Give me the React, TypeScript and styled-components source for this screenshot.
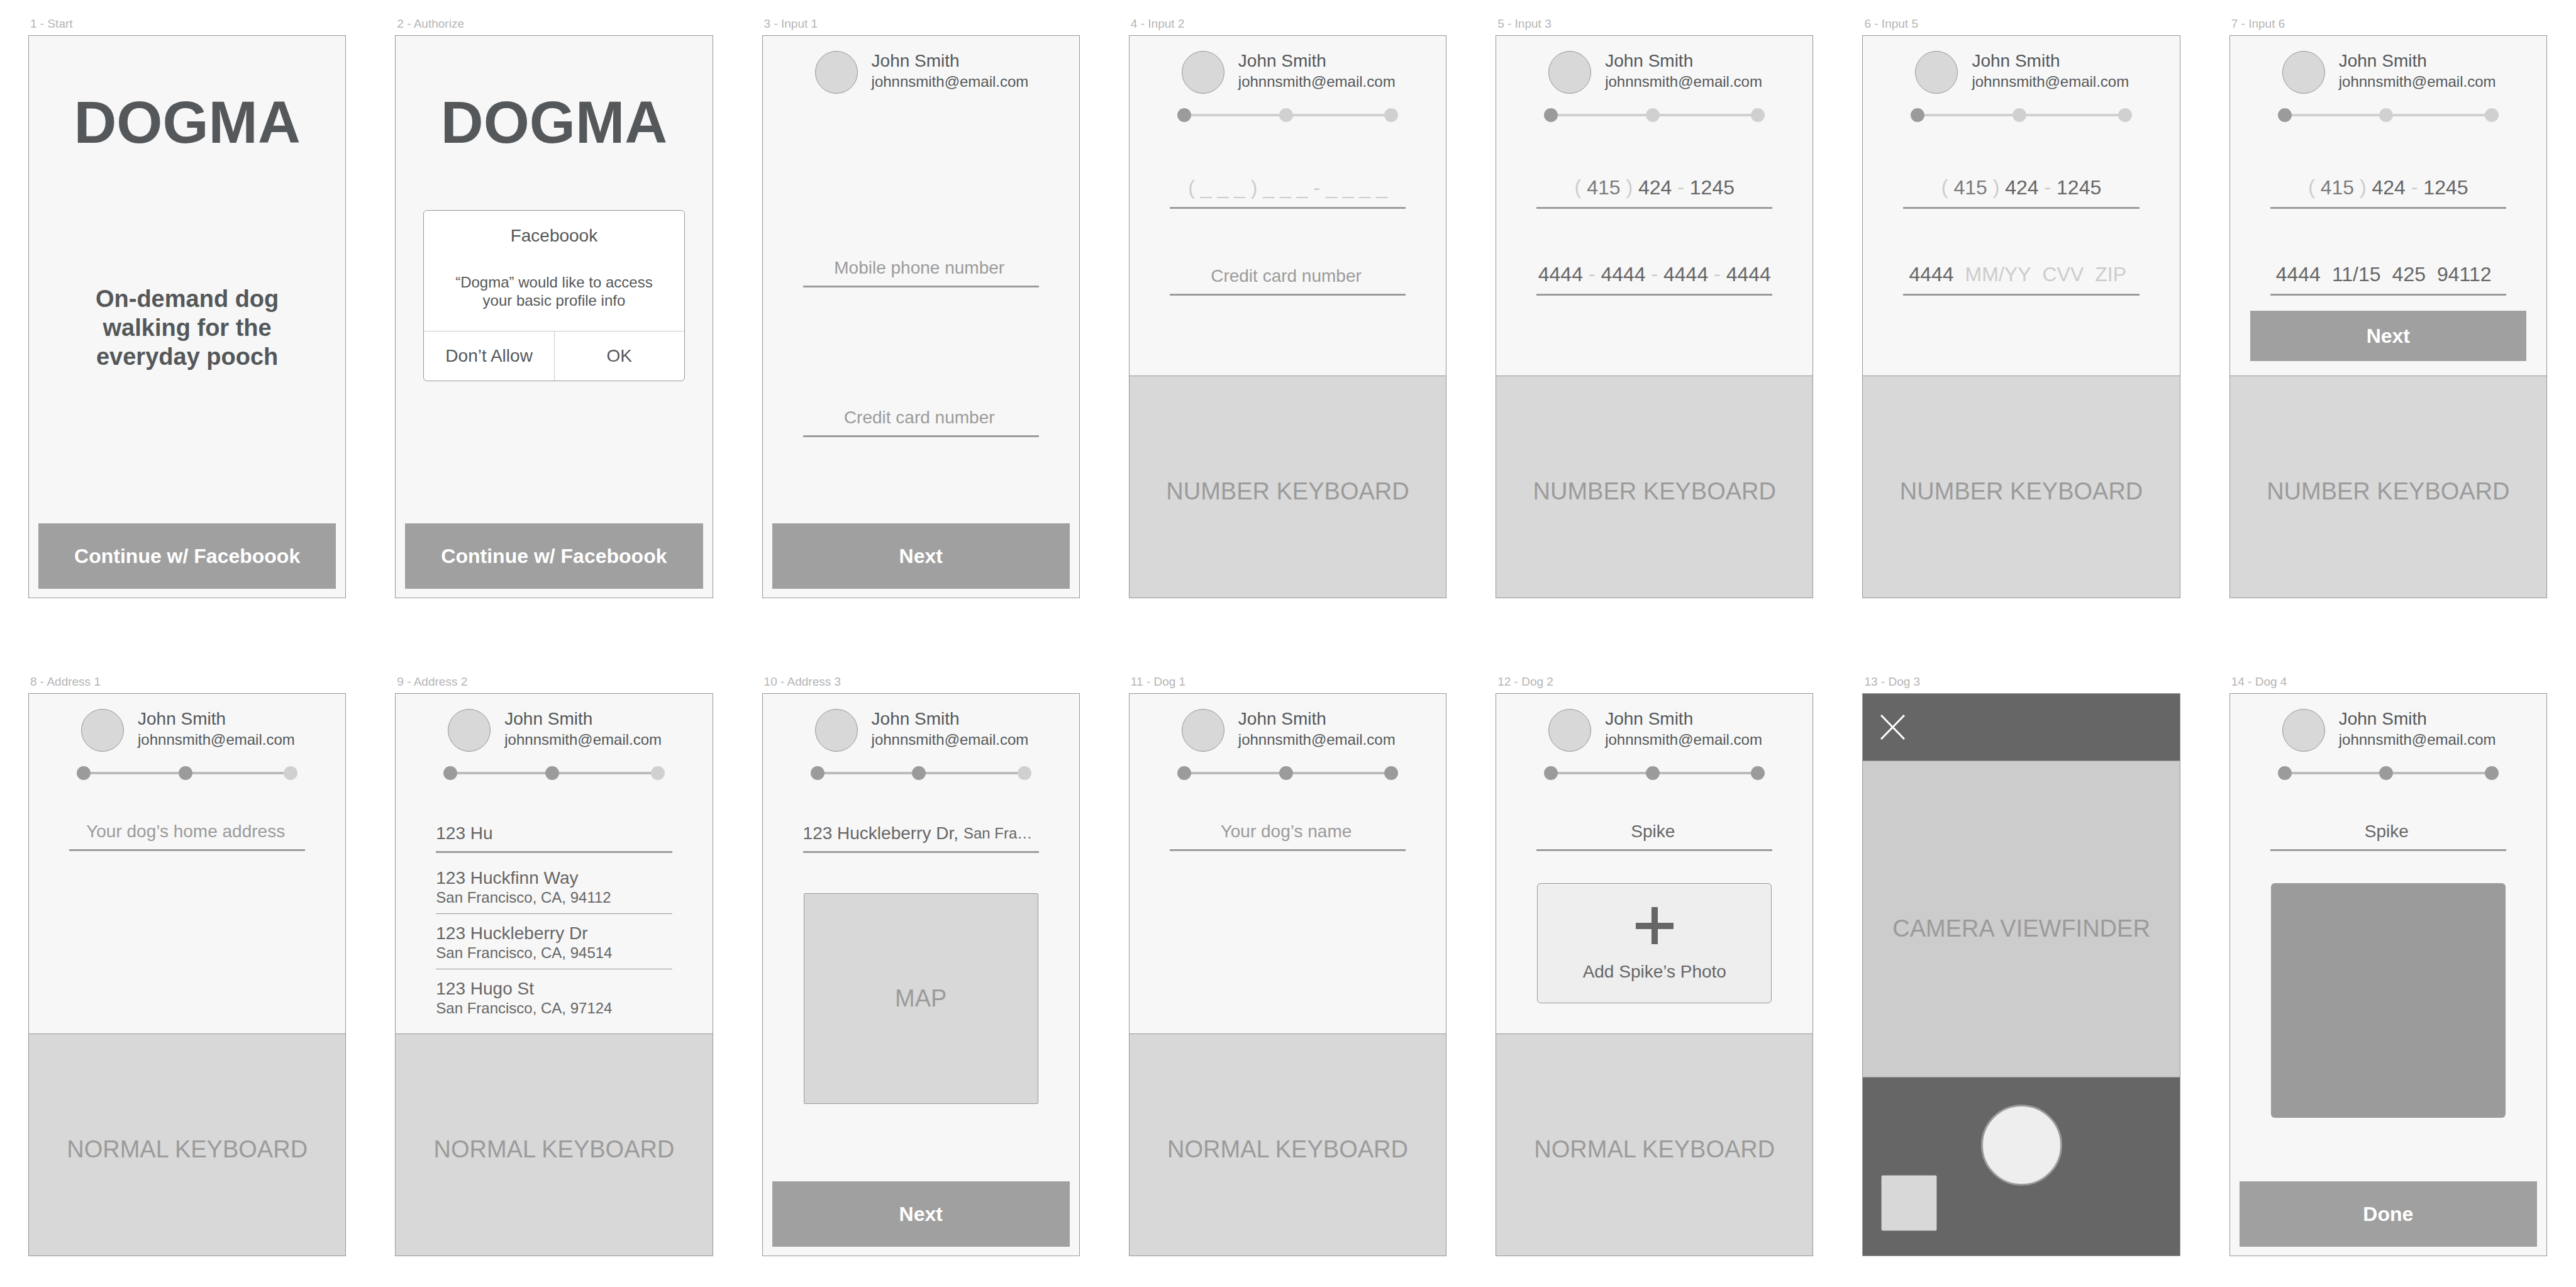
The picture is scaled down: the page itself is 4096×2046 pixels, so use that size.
import React from 'react';
import styled, { createGlobalStyle } from 'styled-components';

const color = {
  ink: '#54585a',
  text: '#666666',
  muted: '#9b9b9b',
  faint: '#cccccc',
  line: '#979797',
  screen: '#f7f7f7',
  block: '#d8d8d8',
  button: '#a0a0a0',
  camera: '#666666',
};

const GlobalStyle = createGlobalStyle`
  *, *::before, *::after { box-sizing: border-box; }
  body { margin: 0; background: #ffffff; }
  body, button, input { font-family: "Liberation Sans", Arial, Helvetica, sans-serif; }
  h1, h2, p, ul, figure { margin: 0; padding: 0; }
  button, input { margin: 0; padding: 0; border: 0; border-radius: 0; background: none; outline: none; }
`;

/* ---------- board ---------- */

const Board = styled.main`
  display: grid;
  grid-template-columns: repeat(7, minmax(0, 1fr));
  column-gap: 78px;
  row-gap: 119px;
  padding: 24px 46px 48px 45px;
`;

const Artboard = styled.section`
  display: flex;
  flex-direction: column;
`;

const ArtboardName = styled.h2`
  padding: 0 3px;
  margin-bottom: 4px;
  font-size: 19px;
  font-weight: 400;
  line-height: 28px;
  color: #b5b5b5;
`;

const Screen = styled.div`
  display: flex;
  flex-direction: column;
  min-height: 895px;
  border: 1px solid ${color.line};
  background: ${color.screen};
`;

const Body = styled.div<{ $top?: number }>`
  flex: 1;
  display: flex;
  flex-direction: column;
  padding: ${(p) => p.$top ?? 0}px 64px 0;
`;

/* ---------- shared parts ---------- */

const Wordmark = styled.h1`
  margin-top: 90px;
  font-size: 94px;
  line-height: 95px;
  font-weight: 700;
  text-align: center;
  color: ${color.ink};
`;

const Tagline = styled.p`
  width: 320px;
  margin: 210px auto auto;
  font-size: 38px;
  line-height: 46px;
  font-weight: 700;
  text-align: center;
  color: ${color.ink};
`;

const PrimaryButton = styled.button<{ $compact?: boolean }>`
  height: ${(p) => (p.$compact ? 80 : 104)}px;
  margin: ${(p) => (p.$compact ? '24px -32px 0' : 'auto 15px 14px')};
  background: ${color.button};
  color: #ffffff;
  font-size: 32px;
  line-height: 40px;
  font-weight: 700;
`;

const ProfileBar = styled.header`
  display: flex;
  align-items: center;
  gap: 22px;
  padding: 24px 0 0 83px;
`;

const Avatar = styled.span`
  width: 68px;
  height: 68px;
  border: 1px solid ${color.line};
  border-radius: 50%;
  background: ${color.block};
`;

const ProfileText = styled.div`
  color: ${color.ink};
`;

const ProfileName = styled.p`
  font-size: 28px;
  line-height: 30px;
`;

const ProfileEmail = styled.p`
  font-size: 24px;
  line-height: 36px;
`;

const Steps = styled.div`
  display: flex;
  align-items: center;
  margin-top: 23px;
  padding: 0 76px;
`;

const Dot = styled.span<{ $on: boolean }>`
  width: 22px;
  height: 22px;
  border-radius: 50%;
  background: ${(p) => (p.$on ? color.muted : '#d0d0d0')};
`;

const Track = styled.span<{ $grow: number; $advanced: boolean }>`
  flex: ${(p) => p.$grow} 1 0;
  height: 4px;
  background: ${(p) => (p.$advanced ? '#bcbcbc' : '#d0d0d0')};
`;

const FieldBox = styled.label<{ $large?: boolean; $gap?: number; $start?: boolean }>`
  display: flex;
  align-items: center;
  justify-content: ${(p) => (p.$start ? 'flex-start' : 'center')};
  gap: ${(p) => (p.$start ? 8 : 0)}px;
  height: 59px;
  margin-top: ${(p) => p.$gap ?? 0}px;
  padding-bottom: ${(p) => (p.$large ? 7 : 0)}px;
  border-bottom: 3px solid ${color.muted};
  font-size: ${(p) => (p.$large ? 32 : 28)}px;
  color: ${color.faint};
  white-space: pre;
`;

const TextInput = styled.input<{ $align?: 'left' | 'center'; $mask?: boolean }>`
  width: 100%;
  padding-right: ${(p) => (p.$align === 'left' || p.$mask ? 0 : 5)}px;
  font-size: inherit;
  line-height: 40px;
  text-align: ${(p) => p.$align ?? 'center'};
  color: ${color.text};
  &::placeholder {
    color: ${(p) => (p.$mask ? color.faint : color.muted)};
    opacity: 1;
  }
`;

const Segment = styled.input<{ $small?: boolean; $soft?: boolean }>`
  field-sizing: content;
  font-size: ${(p) => (p.$small ? '24px' : 'inherit')};
  line-height: 40px;
  color: ${(p) => (p.$soft ? '#7b7b7b' : color.text)};
  &::placeholder {
    color: ${color.faint};
    opacity: 1;
  }
`;

const CardParts = styled.div`
  display: flex;
  flex: 1;
  gap: 18px;
  padding-left: 9px;
`;

const Keyboard = styled.div`
  display: flex;
  align-items: center;
  justify-content: center;
  height: 353px;
  padding-top: 14px;
  border-top: 1px solid ${color.line};
  background: ${color.block};
  font-size: 38px;
  line-height: 46px;
  color: ${color.muted};
`;

/* ---------- permission alert ---------- */

const Alert = styled.div`
  display: flex;
  flex-direction: column;
  margin: 92px 44px 0;
  border: 1px solid ${color.line};
  border-radius: 6px;
  background: #ffffff;
  text-align: center;
  color: ${color.ink};
`;

const AlertTitle = styled.p`
  padding-top: 24px;
  font-size: 28px;
  line-height: 32px;
`;

const AlertMessage = styled.p`
  width: 340px;
  margin: 43px auto 34px;
  font-size: 24px;
  line-height: 29px;
`;

const AlertActions = styled.div`
  display: grid;
  grid-template-columns: 1fr 1fr;
  border-top: 1px solid ${color.faint};
`;

const AlertButton = styled.button`
  height: 78px;
  font-size: 28px;
  color: ${color.ink};
  & + & { border-left: 1px solid ${color.faint}; }
`;

/* ---------- address ---------- */

const Suggestions = styled.ul`
  margin-top: 9px;
  list-style: none;
  color: ${color.text};
`;

const Suggestion = styled.li`
  padding: 15px 0 10px;
  border-bottom: 1px solid ${color.line};
  &:last-child { border-bottom-color: transparent; }
`;

const Street = styled.p`
  font-size: 28px;
  line-height: 32px;
`;

const City = styled.p`
  font-size: 24px;
  line-height: 30px;
`;

const MapBox = styled.div`
  display: flex;
  align-items: center;
  justify-content: center;
  height: 335px;
  margin: 64px 1px 0;
  border: 1px solid ${color.line};
  border-radius: 2px;
  background: ${color.block};
  font-size: 38px;
  color: ${color.muted};
`;

/* ---------- dog photo ---------- */

const AddPhoto = styled.button`
  display: flex;
  flex-direction: column;
  align-items: center;
  gap: 28px;
  height: 191px;
  margin: 51px 1px 0;
  padding-top: 37px;
  border: 1px solid ${color.line};
  border-radius: 6px;
  background: #eeeeee;
  font-size: 28px;
  line-height: 32px;
  color: ${color.text};
`;

const Photo = styled.div`
  height: 373px;
  margin: 51px 1px 0;
  border-radius: 6px;
  background: ${color.muted};
`;

/* ---------- camera ---------- */

const CameraTop = styled.div`
  display: flex;
  align-items: center;
  height: 106px;
  padding: 0 28px;
  background: ${color.camera};
`;

const CloseButton = styled.button`
  width: 39px;
  height: 40px;
`;

const Viewfinder = styled.div`
  flex: 1;
  display: flex;
  align-items: center;
  justify-content: center;
  padding-top: 31px;
  border: solid ${color.line};
  border-width: 1px 0;
  background: #cccccc;
  font-size: 38px;
  color: ${color.muted};
`;

const CameraBottom = styled.div`
  display: grid;
  grid-template-columns: 1fr auto 1fr;
  height: 283px;
  padding: 43px 29px 39px;
  background: ${color.camera};
`;

const Thumbnail = styled.button`
  align-self: end;
  width: 89px;
  height: 89px;
  border: 1px solid ${color.line};
  border-radius: 3px;
  background: ${color.block};
`;

const Shutter = styled.button`
  width: 129px;
  height: 129px;
  border: 3px solid ${color.muted};
  border-radius: 50%;
  background: #eeeeee;
`;

/* ---------- composed pieces ---------- */

function Frame({ name, children }: { name: string; children: React.ReactNode }) {
  return (
    <Artboard>
      <ArtboardName>{name}</ArtboardName>
      <Screen>{children}</Screen>
    </Artboard>
  );
}

function Profile() {
  return (
    <ProfileBar>
      <Avatar />
      <ProfileText>
        <ProfileName>John Smith</ProfileName>
        <ProfileEmail>johnnsmith@email.com</ProfileEmail>
      </ProfileText>
    </ProfileBar>
  );
}

function Progress({ step }: { step: 1 | 2 | 3 }) {
  return (
    <Steps>
      <Dot $on />
      <Track $grow={24} $advanced={step > 1} />
      <Dot $on={step > 1} />
      <Track $grow={25} $advanced={step > 1} />
      <Dot $on={step > 2} />
    </Steps>
  );
}

function Field({ label, value, gap, align }: { label: string; value?: string; gap?: number; align?: 'left' }) {
  return (
    <FieldBox $gap={gap}>
      <TextInput aria-label={label} placeholder={label} defaultValue={value} $align={align} />
    </FieldBox>
  );
}

function PhoneField() {
  return (
    <FieldBox as="div" role="group" aria-label="Mobile phone number" $large>
      {'( '}
      <Segment aria-label="Area code" defaultValue="415" $soft />
      {' ) '}
      <Segment aria-label="Prefix" defaultValue="424" />
      {' - '}
      <Segment aria-label="Line number" defaultValue="1245" />
    </FieldBox>
  );
}

function CardNumberField() {
  return (
    <FieldBox as="div" role="group" aria-label="Credit card number" $large $gap={79}>
      {[0, 1, 2, 3].map((i) => (
        <React.Fragment key={i}>
          {i > 0 && ' - '}
          <Segment aria-label={`Card digits, group ${i + 1}`} defaultValue="4444" />
        </React.Fragment>
      ))}
    </FieldBox>
  );
}

function CardDetailsField({ expiry, cvv, zip }: { expiry?: string; cvv?: string; zip?: string }) {
  return (
    <FieldBox as="div" role="group" aria-label="Card details" $large $gap={79}>
      <CardParts>
        <Segment aria-label="Last four digits" defaultValue="4444" />
        <Segment aria-label="Expiry" placeholder="MM/YY" defaultValue={expiry} />
        <Segment aria-label="CVV" placeholder="CVV" defaultValue={cvv} />
        <Segment aria-label="ZIP" placeholder="ZIP" defaultValue={zip} />
      </CardParts>
    </FieldBox>
  );
}

const places = [
  { street: '123 Huckfinn Way', city: 'San Francisco, CA, 94112' },
  { street: '123 Huckleberry Dr', city: 'San Francisco, CA, 94514' },
  { street: '123 Hugo St', city: 'San Francisco, CA, 97124' },
];

export default function App() {
  return (
    <>
      <GlobalStyle />
      <Board>
        <Frame name="1 - Start">
          <Wordmark>DOGMA</Wordmark>
          <Tagline>On-demand dog walking for the everyday pooch</Tagline>
          <PrimaryButton>Continue w/ Faceboook</PrimaryButton>
        </Frame>

        <Frame name="2 - Authorize">
          <Wordmark>DOGMA</Wordmark>
          <Alert role="alertdialog" aria-label="Faceboook">
            <AlertTitle>Faceboook</AlertTitle>
            <AlertMessage>“Dogma” would like to access your basic profile info</AlertMessage>
            <AlertActions>
              <AlertButton>Don’t Allow</AlertButton>
              <AlertButton>OK</AlertButton>
            </AlertActions>
          </Alert>
          <PrimaryButton>Continue w/ Faceboook</PrimaryButton>
        </Frame>

        <Frame name="3 - Input 1">
          <Profile />
          <Body $top={249}>
            <Field label="Mobile phone number" />
            <Field label="Credit card number" gap={179} />
          </Body>
          <PrimaryButton>Next</PrimaryButton>
        </Frame>

        <Frame name="4 - Input 2">
          <Profile />
          <Progress step={1} />
          <Body $top={79}>
            <FieldBox $large>
              <TextInput aria-label="Mobile phone number" placeholder="( _ _ _ ) _ _ _ - _ _ _ _" $mask />
            </FieldBox>
            <Field label="Credit card number" gap={79} />
          </Body>
          <Keyboard>NUMBER KEYBOARD</Keyboard>
        </Frame>

        <Frame name="5 - Input 3">
          <Profile />
          <Progress step={1} />
          <Body $top={79}>
            <PhoneField />
            <CardNumberField />
          </Body>
          <Keyboard>NUMBER KEYBOARD</Keyboard>
        </Frame>

        <Frame name="6 - Input 5">
          <Profile />
          <Progress step={1} />
          <Body $top={79}>
            <PhoneField />
            <CardDetailsField />
          </Body>
          <Keyboard>NUMBER KEYBOARD</Keyboard>
        </Frame>

        <Frame name="7 - Input 6">
          <Profile />
          <Progress step={1} />
          <Body $top={79}>
            <PhoneField />
            <CardDetailsField expiry="11/15" cvv="425" zip="94112" />
            <PrimaryButton $compact>Next</PrimaryButton>
          </Body>
          <Keyboard>NUMBER KEYBOARD</Keyboard>
        </Frame>

        <Frame name="8 - Address 1">
          <Profile />
          <Progress step={2} />
          <Body $top={54}>
            <Field label="Your dog’s home address" />
          </Body>
          <Keyboard>NORMAL KEYBOARD</Keyboard>
        </Frame>

        <Frame name="9 - Address 2">
          <Profile />
          <Progress step={2} />
          <Body $top={57}>
            <Field label="Home address" value="123 Hu" align="left" />
            <Suggestions>
              {places.map((p) => (
                <Suggestion key={p.street}>
                  <Street>{p.street}</Street>
                  <City>{p.city}</City>
                </Suggestion>
              ))}
            </Suggestions>
          </Body>
          <Keyboard>NORMAL KEYBOARD</Keyboard>
        </Frame>

        <Frame name="10 - Address 3">
          <Profile />
          <Progress step={2} />
          <Body $top={57}>
            <FieldBox as="div" role="group" aria-label="Home address" $start>
              <Segment aria-label="Street" defaultValue="123 Huckleberry Dr," />
              <Segment aria-label="City" defaultValue="San Fra…" $small />
            </FieldBox>
            <MapBox>MAP</MapBox>
          </Body>
          <PrimaryButton>Next</PrimaryButton>
        </Frame>

        <Frame name="11 - Dog 1">
          <Profile />
          <Progress step={3} />
          <Body $top={54}>
            <Field label="Your dog’s name" />
          </Body>
          <Keyboard>NORMAL KEYBOARD</Keyboard>
        </Frame>

        <Frame name="12 - Dog 2">
          <Profile />
          <Progress step={3} />
          <Body $top={54}>
            <Field label="Your dog’s name" value="Spike" />
            <AddPhoto>
              <svg width="60" height="59" viewBox="0 0 60 59" aria-hidden="true">
                <path d="M30 0V59M0 30H60" stroke={color.camera} strokeWidth="10" fill="none" />
              </svg>
              Add Spike’s Photo
            </AddPhoto>
          </Body>
          <Keyboard>NORMAL KEYBOARD</Keyboard>
        </Frame>

        <Frame name="13 - Dog 3">
          <CameraTop>
            <CloseButton aria-label="Close camera">
              <svg width="39" height="40" viewBox="0 0 39 40" aria-hidden="true">
                <path d="M1 1L38 39M38 1L1 39" stroke="#ffffff" strokeWidth="3" fill="none" />
              </svg>
            </CloseButton>
          </CameraTop>
          <Viewfinder>CAMERA VIEWFINDER</Viewfinder>
          <CameraBottom>
            <Thumbnail aria-label="Photo library" />
            <Shutter aria-label="Take photo" />
          </CameraBottom>
        </Frame>

        <Frame name="14 - Dog 4">
          <Profile />
          <Progress step={3} />
          <Body $top={54}>
            <Field label="Your dog’s name" value="Spike" />
            <Photo role="img" aria-label="Photo of Spike" />
          </Body>
          <PrimaryButton>Done</PrimaryButton>
        </Frame>
      </Board>
    </>
  );
}
